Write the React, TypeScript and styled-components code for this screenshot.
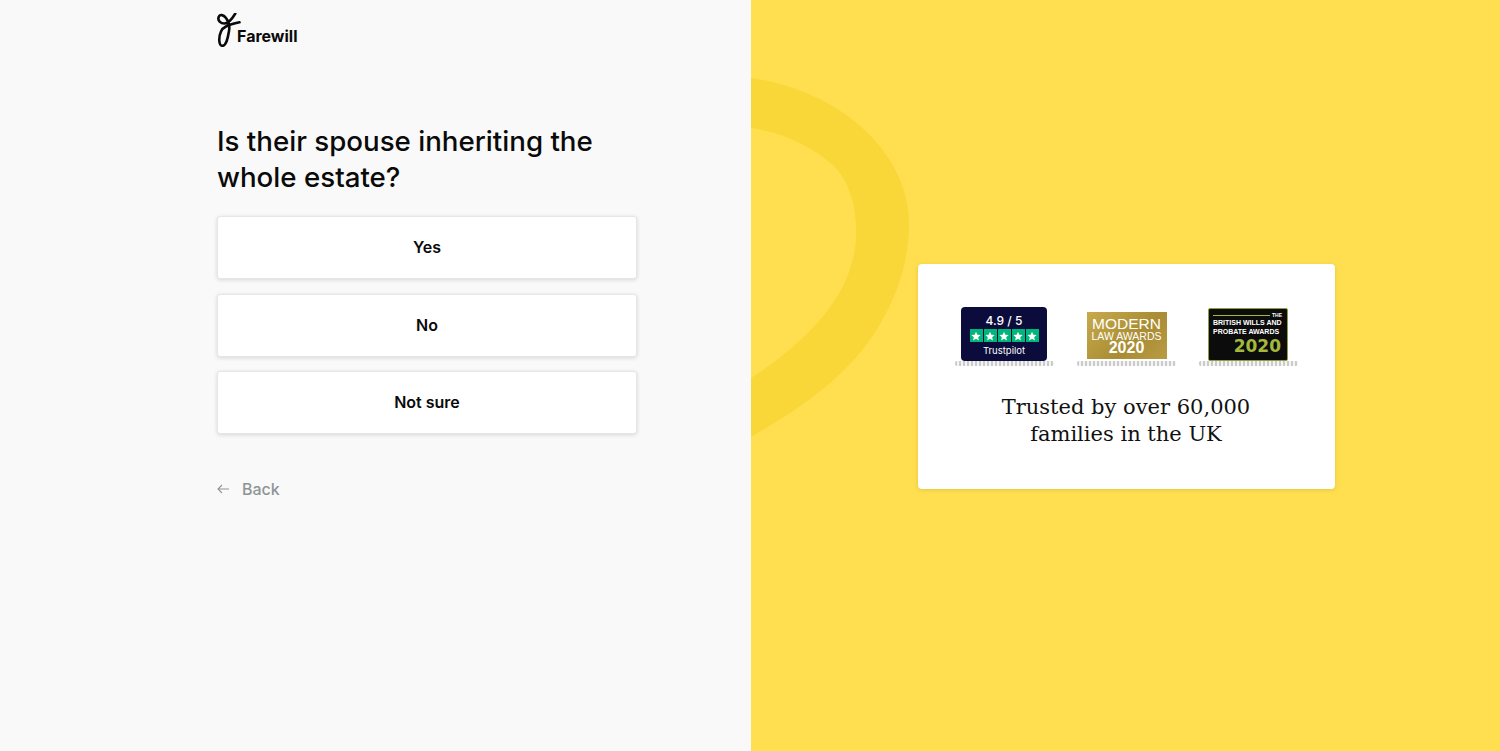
import { FC } from "react";
import styled, { createGlobalStyle } from "styled-components";

const GlobalStyle = createGlobalStyle`
  html, body {
    margin: 0;
    padding: 0;
    height: 100%;
    font-family: Inter, "Liberation Sans", sans-serif;
    color: #0a0a0a;
  }
`;

const Page = styled.div`
  display: grid;
  grid-template-columns: 751px 749px;
  height: 751px;
  overflow: hidden;
`;

const LeftPane = styled.div`
  background: #f9f9f9;
  padding: 13px 0 0 217px;
`;

const LeftColumn = styled.div`
  display: flex;
  flex-direction: column;
  width: 420px;
`;

const LogoRow = styled.div`
  display: flex;
  align-items: flex-end;
  height: 34px;
`;

const LogoText = styled.span`
  font-size: 16px;
  font-weight: 700;
  line-height: 20px;
  margin-left: -4px;
  padding-bottom: 1px;
`;

const Question = styled.h1`
  margin: 76px 0 21px;
  font-size: 27.7px;
  font-weight: 500;
  line-height: 36px;
`;

const Options = styled.div`
  display: flex;
  flex-direction: column;
  gap: 14.5px;
`;

const OptionButton = styled.button`
  height: 63px;
  padding: 0 0 1px;
  background: #fff;
  border: 1px solid #e6e6e6;
  border-radius: 3px;
  box-shadow: 0 1px 4px rgba(0, 0, 0, 0.14);
  font-family: inherit;
  font-size: 16px;
  font-weight: 600;
  color: #0a0a0a;
`;

const BackLink = styled.div`
  display: flex;
  align-items: center;
  gap: 13px;
  margin-top: 43px;
  font-size: 16px;
  font-weight: 500;
  line-height: 24px;
  color: #8f9597;
`;

const RightPane = styled.div`
  position: relative;
  display: flex;
  align-items: center;
  justify-content: center;
  background: #ffdf4f;
`;

const Wave = styled.svg`
  position: absolute;
  left: 0;
  top: 0;
`;

const Card = styled.div`
  position: relative;
  display: flex;
  flex-direction: column;
  align-items: center;
  width: 417px;
  height: 225px;
  margin: 2px 0 0 1px;
  padding-top: 43px;
  box-sizing: border-box;
  background: #fff;
  border-radius: 4px;
  box-shadow: 0 1px 4px rgba(0, 0, 0, 0.12);
`;

const Badges = styled.div`
  display: flex;
  gap: 21px;
  height: 59px;
`;

const BadgeSlot = styled.div`
  display: flex;
  flex-direction: column;
  align-items: center;
  justify-content: flex-end;
  width: 101px;
  height: 59px;
`;

const Reflection = styled.div`
  width: 99px;
  height: 5px;
  opacity: 0.6;
  filter: blur(0.7px);
  background: repeating-linear-gradient(90deg, #a8a8a8 0 2px, #f0f0f0 2px 4px);
  border-radius: 2px;
`;

const TrustBadge = styled.div`
  display: flex;
  flex-direction: column;
  align-items: center;
  width: 86px;
  height: 54px;
  background: #0b0b3c;
  border-radius: 4px;
  color: #fff;
`;

const Score = styled.div`
  font-size: 12px;
  font-weight: 500;
  line-height: 13px;
  margin-top: 7px;
`;

const Stars = styled.div`
  display: flex;
  gap: 1px;
  margin-top: 2px;
`;

const Star = styled.span`
  display: flex;
  align-items: center;
  justify-content: center;
  width: 13px;
  height: 13px;
  background: #00b67a;
`;

const TrustName = styled.div`
  font-size: 9.5px;
  line-height: 12px;
  margin-top: 3px;
`;

const GoldBadge = styled.div`
  display: flex;
  flex-direction: column;
  align-items: center;
  width: 80px;
  height: 47px;
  margin: 0 0 2px 1px;
  padding-top: 5px;
  box-sizing: border-box;
  background: linear-gradient(135deg, #c8aa4c, #a98c33 60%, #b89b42);
  color: #fff;
  font-family: "Liberation Sans", sans-serif;
`;

const GoldTitle = styled.div`
  font-size: 15.5px;
  line-height: 14px;
`;

const GoldLine = styled.div`
  font-size: 10.5px;
  line-height: 10px;
`;

const GoldYear = styled.div`
  font-size: 16px;
  font-weight: 700;
  line-height: 14px;
`;

const BlackBadge = styled.div`
  display: flex;
  flex-direction: column;
  width: 80px;
  height: 53px;
  padding: 3px 3px 0 4px;
  box-sizing: border-box;
  background: #0c0c0c;
  border: 1px solid #8f9f3a;
  border-radius: 2px;
  color: #fff;
  font-family: "Liberation Sans", sans-serif;
  font-weight: 700;
`;

const TheRow = styled.div`
  display: flex;
  align-items: center;
  gap: 2px;
  font-size: 5px;
  line-height: 6px;
  padding-right: 2px;
`;

const GreenRule = styled.span`
  flex: 1;
  height: 1px;
  background: #a3b83c;
`;

const BlackLine = styled.div`
  font-size: 7px;
  line-height: 9px;
  white-space: nowrap;
`;

const BlackYear = styled.div`
  align-self: flex-end;
  margin-top: 1px;
  padding-right: 3px;
  font-family: "DejaVu Sans", sans-serif;
  font-size: 17px;
  line-height: 19px;
  color: #a3b83c;
`;

const Trusted = styled.p`
  margin: 28px 0 0;
  text-align: center;
  font-family: "DejaVu Serif", serif;
  font-size: 21px;
  line-height: 26.5px;
  color: #111;
`;

const LogoMark: FC = () => (
  <svg width="24" height="34" viewBox="0 0 24 34" fill="none">
    <path
      d="M18.3 0.5C15 6 11.5 10.5 7.5 10.5C3.5 10.5 0.5 7.5 1.6 4.2C2.8 1 6.5 1.5 9 5C12 8.8 13 12.5 12 18C11 24 9.5 32.8 5.5 32.8C1.5 32.8 1.5 24 4 18.5C6 14 10 12 22.5 9.3"
      stroke="#0a0a0a"
      strokeWidth="2.6"
      strokeLinecap="round"
    />
  </svg>
);

const StarIcon: FC = () => (
  <svg width="10" height="10" viewBox="0 0 24 24" fill="#fff">
    <path d="M12 1.5l3.2 7.4 8 .7-6 5.3 1.8 7.9L12 18.6l-7 4.2 1.8-7.9-6-5.3 8-.7z" />
  </svg>
);

const App: FC = () => {
  const options = ["Yes", "No", "Not sure"];

  return (
    <>
      <GlobalStyle />
      <Page>
        <LeftPane>
          <LeftColumn>
            <LogoRow>
              <LogoMark />
              <LogoText>Farewill</LogoText>
            </LogoRow>
            <Question>
              Is their spouse inheriting the
              <br />
              whole estate?
            </Question>
            <Options>
              {options.map((option) => (
                <OptionButton key={option}>{option}</OptionButton>
              ))}
            </Options>
            <BackLink>
              <svg width="12" height="10" viewBox="0 0 12 10" fill="none" stroke="#8f9597" strokeWidth="1.1">
                <path d="M12 5H1M5 1L1 5l4 4" />
              </svg>
              Back
            </BackLink>
          </LeftColumn>
        </LeftPane>
        <RightPane>
          <Wave width="170" height="440" viewBox="0 0 170 440">
            <path
              d="M0 78C28 82 60 92 88 110C128 136 158 176 158 224C158 262 146 296 128 326C98 376 50 408 0 437V378C40 352 76 320 94 282C102 264 106 244 105 226C104 200 96 180 84 167C62 146 30 132 0 128Z"
              fill="#f9d738"
            />
          </Wave>
          <Card>
            <Badges>
              <BadgeSlot>
                <TrustBadge>
                  <Score>4.9 / 5</Score>
                  <Stars>
                    {[0, 1, 2, 3, 4].map((i) => (
                      <Star key={i}>
                        <StarIcon />
                      </Star>
                    ))}
                  </Stars>
                  <TrustName>Trustpilot</TrustName>
                </TrustBadge>
                <Reflection />
              </BadgeSlot>
              <BadgeSlot>
                <GoldBadge>
                  <GoldTitle>MODERN</GoldTitle>
                  <GoldLine>LAW AWARDS</GoldLine>
                  <GoldYear>2020</GoldYear>
                </GoldBadge>
                <Reflection />
              </BadgeSlot>
              <BadgeSlot>
                <BlackBadge>
                  <TheRow>
                    <GreenRule />
                    THE
                  </TheRow>
                  <BlackLine>BRITISH WILLS AND</BlackLine>
                  <BlackLine>PROBATE AWARDS</BlackLine>
                  <BlackYear>2020</BlackYear>
                </BlackBadge>
                <Reflection />
              </BadgeSlot>
            </Badges>
            <Trusted>
              Trusted by over 60,000
              <br />
              families in the UK
            </Trusted>
          </Card>
        </RightPane>
      </Page>
    </>
  );
};

export default App;
